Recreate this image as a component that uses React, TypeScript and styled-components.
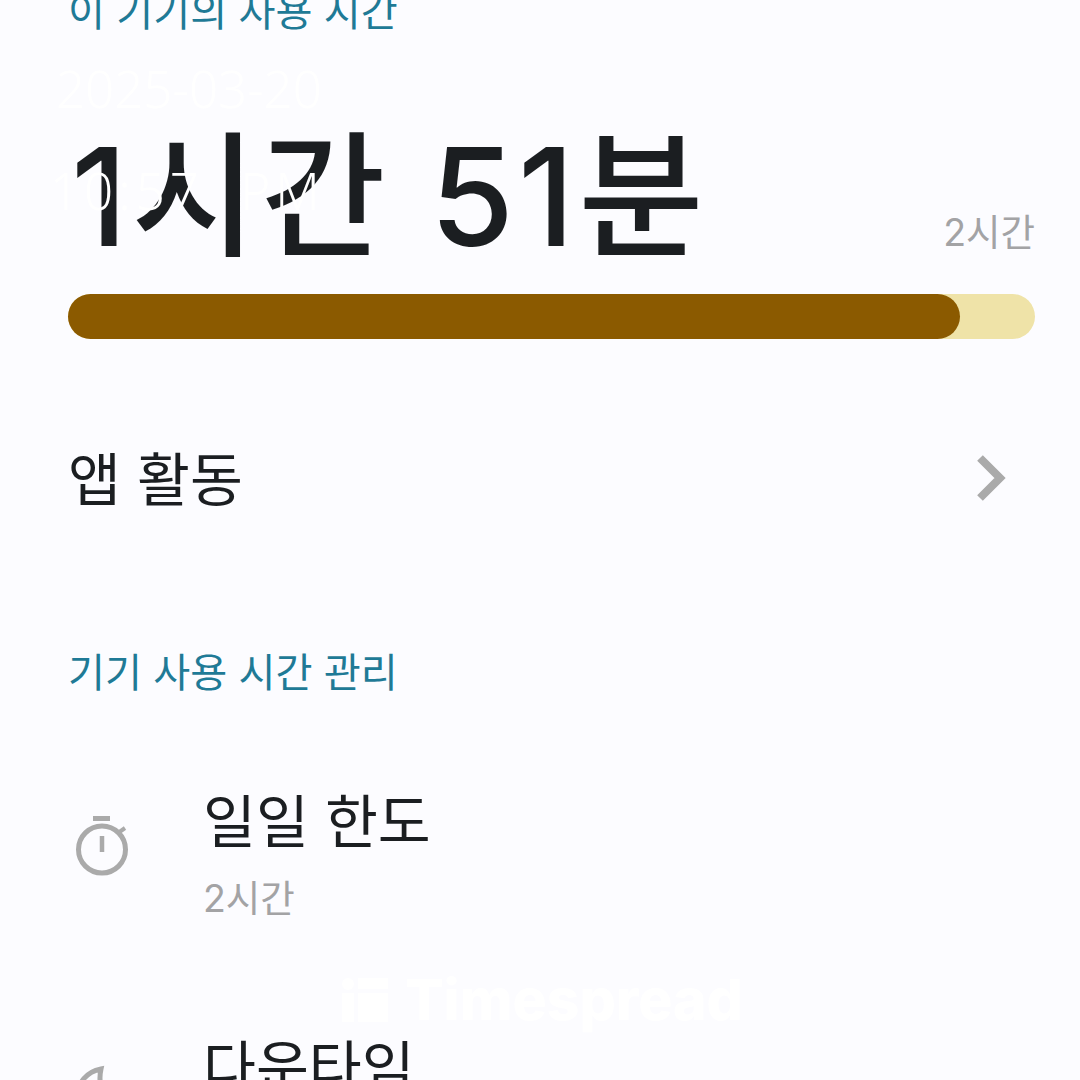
import * as React from "react";
import styled, {createGlobalStyle} from "styled-components";

const GlobalStyle = createGlobalStyle`
  html, body {
    margin: 0;
    padding: 0;
    background: #fcfcff;
  }
  body {
    font-family: Inter, "Noto Sans CJK KR", sans-serif;
  }
`;

const TimerIcon = () => (
  <svg width="52" height="60" viewBox="0 0 52 60" fill="none" stroke="#aaaaaa" strokeWidth="5">
    <path d="M17 2.5h17" />
    <circle cx="26" cy="33.5" r="23.5" />
    <path d="M26 20v16" strokeWidth="4.5" />
    <path d="M42 17l7-5" strokeWidth="4" />
  </svg>
);

const MoonIcon = () => (
  <svg width="52" height="60" viewBox="0 0 52 60" fill="none" stroke="#aaaaaa" strokeWidth="5">
    <path d="M25 7C10 10 2 21 2 33c0 14 11 25 25 25 11 0 20-6 24-16C36 46 20 30 25 7Z" />
  </svg>
);

const ChevronIcon = () => (
  <svg width="30" height="46" viewBox="0 0 30 46" fill="none" stroke="#aaaaaa" strokeWidth="8">
    <path d="M4 3l20 20L4 43" />
  </svg>
);

const LogoMark = () => (
  <svg width="46" height="44" viewBox="0 0 46 44" fill="#ffffff">
    <circle cx="6" cy="6" r="6" />
    <rect x="0" y="15" width="12" height="29" />
    <rect x="16" y="0" width="30" height="11" />
    <rect x="16" y="15" width="30" height="29" />
  </svg>
);

const App = () => {
  return (
    <Page>
      <GlobalStyle />
      <Content>
        <SectionLabel>이 기기의 사용 시간</SectionLabel>
        <UsageRow>
          <UsageValue>1시간 51분</UsageValue>
          <UsageLimit>2시간</UsageLimit>
        </UsageRow>
        <Track>
          <Fill style={{width: `${(892 / 967) * 100}%`}} />
        </Track>
        <ActivityRow>
          <RowTitle>앱 활동</RowTitle>
          <ChevronSlot>
            <ChevronIcon />
          </ChevronSlot>
        </ActivityRow>
        <ManageLabel>기기 사용 시간 관리</ManageLabel>
        <ListRow>
          <IconSlot>
            <TimerIcon />
          </IconSlot>
          <RowText>
            <RowTitle>일일 한도</RowTitle>
            <RowDetail>2시간</RowDetail>
          </RowText>
        </ListRow>
        <ListRow $next={true}>
          <IconSlot>
            <MoonIcon />
          </IconSlot>
          <RowText>
            <RowTitle>다운타임</RowTitle>
          </RowText>
        </ListRow>
      </Content>
      <StampDate>2025-03-20</StampDate>
      <StampTime>10:57 PM</StampTime>
      <Brand>
        <LogoMark />
        <BrandName>Timespread</BrandName>
      </Brand>
    </Page>
  );
};

const Page = styled.div`
  position: relative;
  width: 1080px;
  height: 1080px;
  overflow: hidden;
  background: #fcfcff;
`;

const Content = styled.div`
  display: flex;
  flex-direction: column;
  margin-top: -13px;
  padding: 0 45px 0 68px;
`;

const SectionLabel = styled.div`
  font-size: 40.2px;
  line-height: 50px;
  color: #1f7a96;
`;

const ManageLabel = styled(SectionLabel)`
  margin-top: 132px;
`;

const UsageRow = styled.div`
  display: flex;
  justify-content: space-between;
  align-items: flex-end;
  margin-top: 80px;
`;

const UsageValue = styled.div`
  padding-left: 3px;
  font-size: 136px;
  line-height: 160px;
  letter-spacing: 4px;
  font-weight: 500;
  color: #1b1e21;
  white-space: nowrap;
`;

const Secondary = styled.div`
  font-size: 37.5px;
  line-height: 50px;
  color: #a3a3a5;
`;

const UsageLimit = styled(Secondary)`
  margin-bottom: 19px;
`;

const RowDetail = styled(Secondary)`
  margin-top: 16px;
`;

const Track = styled.div`
  height: 45px;
  margin-top: 17px;
  border-radius: 23px;
  background: #efe3a8;
`;

const Fill = styled.div`
  height: 100%;
  border-radius: 23px;
  background: #8b5a00;
`;

const ActivityRow = styled.div`
  display: flex;
  justify-content: space-between;
  align-items: center;
  margin-top: 105px;
  padding-right: 29px;
`;

const ChevronSlot = styled.div`
  display: flex;
  padding-bottom: 4px;
`;

const ListRow = styled.div<{$next?: boolean}>`
  display: flex;
  align-items: center;
  margin-top: ${props => (props.$next ? "106px" : "88px")};
`;

const IconSlot = styled.div`
  display: flex;
  flex: 0 0 135px;
  box-sizing: border-box;
  padding: 0 0 21px 8px;
`;

const RowText = styled.div`
  display: flex;
  flex-direction: column;
  min-height: 140px;
`;

const RowTitle = styled.div`
  font-size: 57.5px;
  line-height: 72px;
  color: #1b1e21;
`;

const Stamp = styled.div`
  position: absolute;
  left: 56px;
  font-family: "Noto Sans", sans-serif;
  font-size: 51px;
  line-height: 56px;
  font-weight: 300;
  color: #ffffff;
`;

const StampDate = styled(Stamp)`
  top: 60px;
`;

const StampTime = styled(Stamp)`
  top: 162px;
  left: 50px;
  word-spacing: 18px;
  letter-spacing: 5px;
`;

const Brand = styled.div`
  position: absolute;
  left: 342px;
  top: 978px;
  display: flex;
  align-items: center;
  gap: 17px;
`;

const BrandName = styled.div`
  font-family: Inter, sans-serif;
  font-size: 57px;
  line-height: 44px;
  font-weight: 800;
  color: #ffffff;
`;

export default App;
